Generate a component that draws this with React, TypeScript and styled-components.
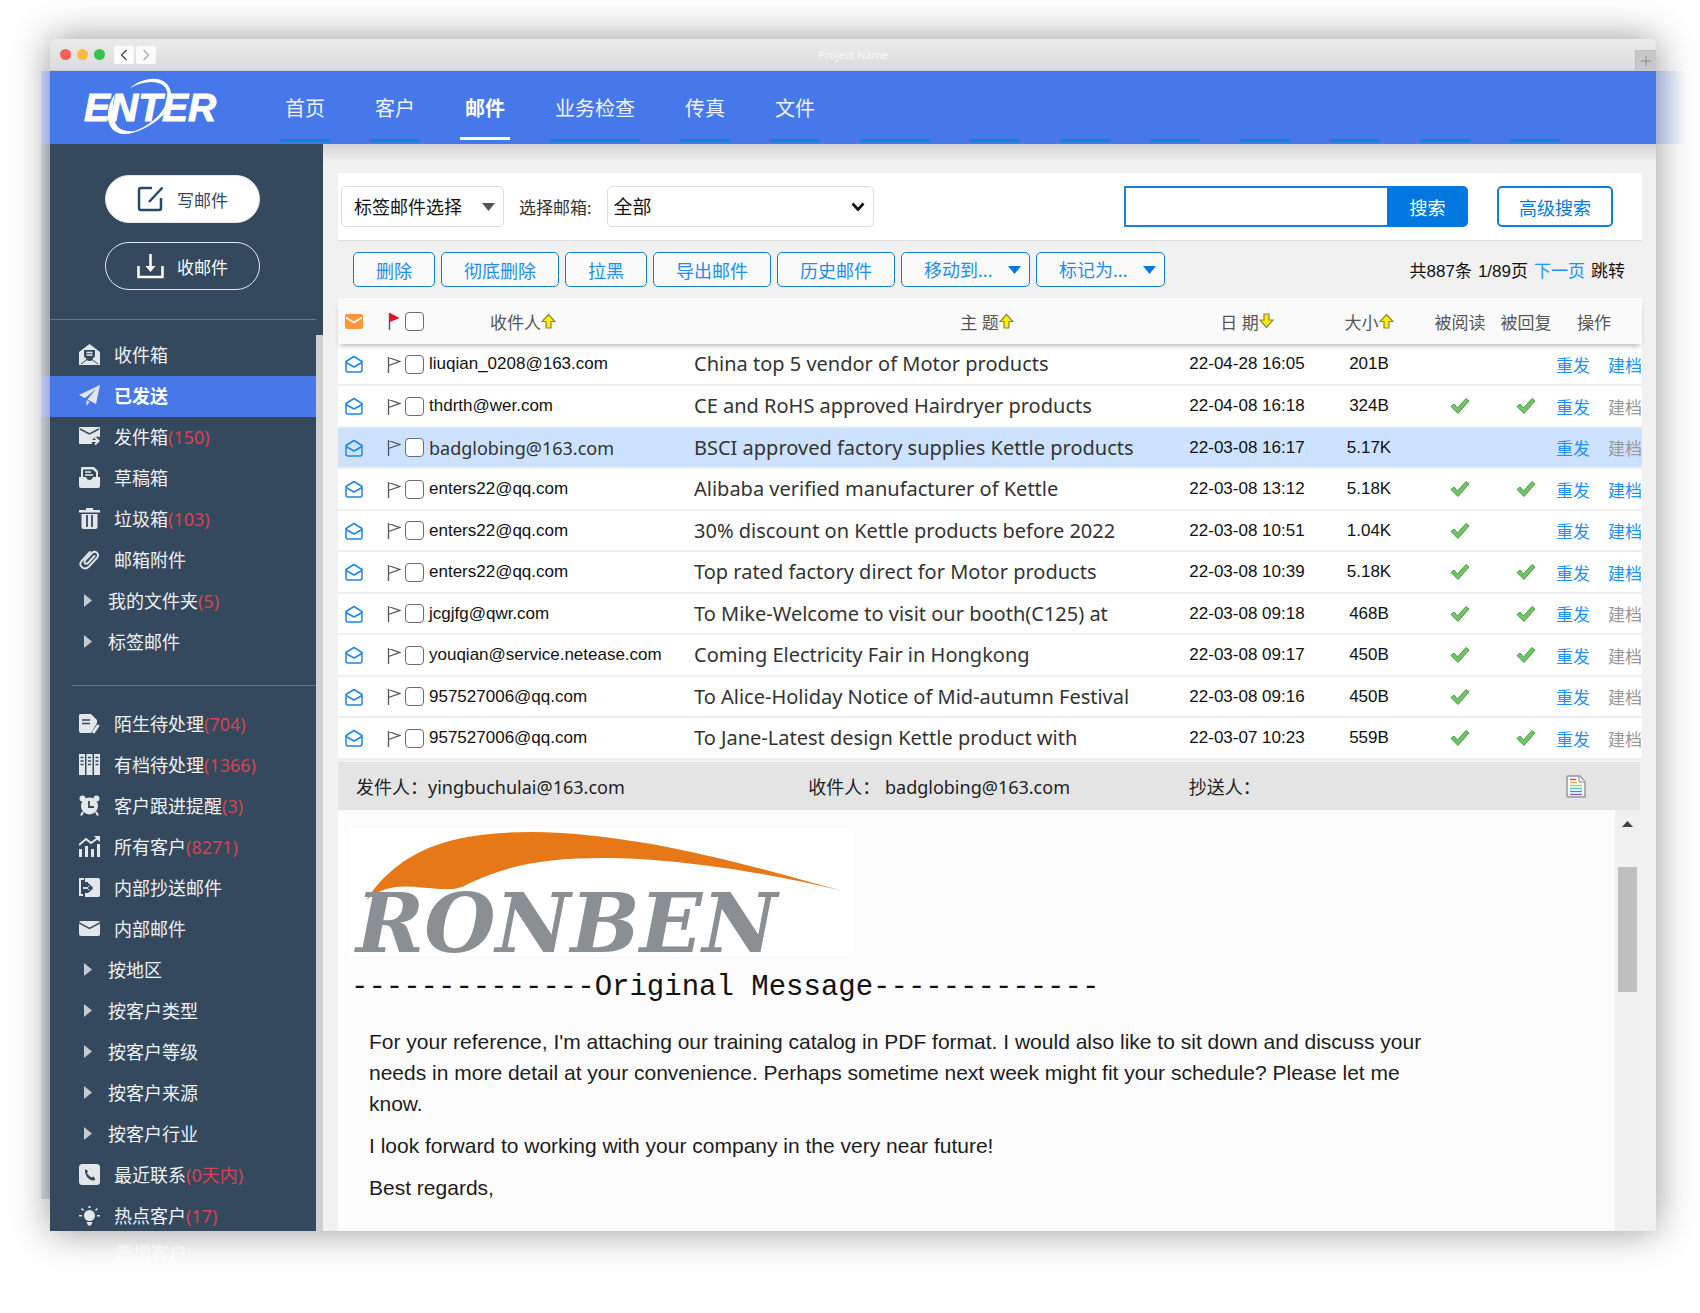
import React from "react";
import styled, { createGlobalStyle, css } from "styled-components";

const cjk = `"Noto Sans", "Noto Sans CJK SC", sans-serif`;
const arial = `"Liberation Sans", "Noto Sans CJK SC", sans-serif`;

const GlobalStyle = createGlobalStyle`
  * { box-sizing: border-box; }
  body { margin: 0; background: #fff; font-family: ${cjk}; }
  button, input, select { font-family: inherit; }
  a { text-decoration: none; color: inherit; }
  ul { list-style: none; margin: 0; padding: 0; }
  svg { display: block; flex: none; }
`;

const Page = styled.div`
  height: 100vh;
  padding: 39px 44px 82px 50px;
  overflow: hidden;
`;

const Window = styled.div`
  position: relative;
  height: 100%;
  display: flex;
  flex-direction: column;
  border-radius: 6px 6px 0 0;
  box-shadow: 0 0 38px rgba(0, 0, 0, 0.42);
  &::before {
    content: "";
    position: absolute;
    left: -9px;
    top: 104px;
    bottom: 32px;
    width: 9px;
    background: linear-gradient(90deg, #c3c7c9, #a4abb0);
  }
`;

/* ---------- title bar ---------- */
const TitleBar = styled.div`
  height: 32px;
  display: grid;
  grid-template-columns: 1fr auto 1fr;
  align-items: center;
  background: linear-gradient(#ebebeb, #dcdcdc);
  border-bottom: 1px solid #c4c8d2;
  border-radius: 6px 6px 0 0;
`;
const WindowControls = styled.div`
  display: flex;
  align-items: center;
  gap: 6px;
  padding-left: 10px;
`;
const Light = styled.span<{ $color: string }>`
  width: 11px;
  height: 11px;
  border-radius: 50%;
  background: ${(p) => p.$color};
`;
const History = styled.div`
  display: flex;
  gap: 2px;
  padding-left: 3px;
`;
const HistoryButton = styled.button`
  width: 20px;
  height: 18px;
  padding: 0;
  display: grid;
  place-items: center;
  border: 0;
  border-radius: 2px;
  background: #fbfbfb;
`;
const Title = styled.span`
  font-size: 11px;
  color: #f8f8f8;
`;
const NewTab = styled.button`
  justify-self: end;
  align-self: end;
  width: 21px;
  height: 20px;
  padding: 0;
  display: grid;
  place-items: center;
  border: 1px solid #bcbcbc;
  border-width: 1px 0 0 1px;
  background: #c8c8c8;
`;

/* ---------- header ---------- */
const Header = styled.header`
  position: relative;
  z-index: 1;
  height: 73px;
  flex: none;
  display: flex;
  background: #4678e9;
  &::before {
    content: "";
    position: absolute;
    left: -9px;
    top: 0;
    bottom: 0;
    width: 9px;
    background: linear-gradient(90deg, #c0cbe9, #9cb0e4);
  }
  &::after {
    content: "";
    position: absolute;
    left: 100%;
    top: 0;
    bottom: 0;
    width: 30px;
    background: linear-gradient(90deg, rgba(90, 130, 230, 0.34), rgba(90, 130, 230, 0));
  }
`;
const Brand = styled.a`
  width: 230px;
  padding: 6px 0 0 34px;
`;
const Nav = styled.nav`
  display: flex;
  gap: 40px;
`;
const NavItem = styled.a<{ $active?: boolean }>`
  height: 71px;
  padding: 20px 5px 0;
  border-bottom: 3px solid #0a86d2;
  font-size: 20px;
  line-height: 36px;
  color: #eef3ff;
  white-space: nowrap;
  ${(p) =>
    p.$active &&
    css`
      height: 69px;
      font-weight: 700;
      color: #fff;
      border-color: #fff;
    `}
`;
const NavSlot = styled.span<{ $width: number }>`
  width: ${(p) => p.$width}px;
  height: 71px;
  border-bottom: 3px solid #0a86d2;
`;

/* ---------- body ---------- */
const Body = styled.div`
  flex: 1;
  min-height: 0;
  display: flex;
  background: #f0f0f0;
`;
const Sidebar = styled.aside`
  width: 273px;
  flex: none;
  overflow-x: visible;
  overflow-y: clip;
  background: #34485e;
`;
const SidebarTop = styled.div`
  height: 176px;
  margin-right: 7px;
  padding: 31px 0 0 55px;
  display: flex;
  flex-direction: column;
  gap: 19px;
  border-bottom: 1px solid #66778a;
`;
const PillButton = styled.button<{ $solid?: boolean }>`
  width: 155px;
  height: 48px;
  padding: 0 0 0 31px;
  display: flex;
  align-items: center;
  gap: 13px;
  border: 1px solid #e4e8ec;
  border-radius: 24px;
  font-size: 17px;
  background: ${(p) => (p.$solid ? "#fff" : "transparent")};
  color: ${(p) => (p.$solid ? "#34485e" : "#fff")};
`;
const SidebarScroll = styled.div`
  margin-top: 15px;
  border-right: 7px solid #d0d0d0;
`;
const FolderDivider = styled.hr`
  margin: 22px 0 18px 22px;
  border: 0;
  border-top: 1px solid #66778a;
`;
const Folder = styled.a<{ $active?: boolean; $group?: boolean }>`
  position: relative;
  height: 41px;
  padding: 0 0 2px ${(p) => (p.$group ? 34 : 29)}px;
  display: flex;
  align-items: center;
  gap: ${(p) => (p.$group ? 16 : 14)}px;
  font-size: 18px;
  line-height: 24px;
  color: #f0f2f4;
  white-space: nowrap;
  ${(p) =>
    p.$active &&
    css`
      background: #4878e8;
      color: #fff;
      font-weight: 700;
      &::before {
        content: "";
        position: absolute;
        left: -9px;
        top: 0;
        bottom: 0;
        width: 9px;
        background: linear-gradient(90deg, #c0cbe9, #9cb0e4);
      }
    `}
`;
const Count = styled.span`
  color: #d8434f;
`;
const FadedFolder = styled.div`
  position: absolute;
  left: 65px;
  top: 100%;
  padding-top: 10px;
  font-size: 18px;
  line-height: 24px;
  color: rgba(255, 255, 255, 0.6);
`;

/* ---------- main panel ---------- */
const Main = styled.main`
  flex: 1;
  min-width: 0;
  display: flex;
  flex-direction: column;
  padding: 29px 14px 0 15px;
  background: linear-gradient(#d4d1d1, #f1f1f1 18px);
`;
const FilterBar = styled.form`
  height: 68px;
  flex: none;
  display: flex;
  align-items: center;
  padding: 0 29px 0 3px;
  background: #fff;
  border-bottom: 1px solid #dedede;
`;
const SelectWrap = styled.span`
  position: relative;
  display: inline-flex;
  align-items: center;
  svg {
    position: absolute;
    right: 9px;
    pointer-events: none;
  }
`;
const Select = styled.select<{ $width: number; $tool?: boolean }>`
  appearance: none;
  width: ${(p) => p.$width}px;
  height: 41px;
  padding: 0 0 0 12px;
  border: 1px solid #dcdcdc;
  border-radius: 5px;
  background: #fff;
  font-size: 18px;
  color: #111;
  ${(p) =>
    p.$tool &&
    css`
      height: 35px;
      padding-left: 22px;
      border-color: #0d7de0;
      background: #fafafa;
      color: #1e8cf0;
    `}
`;
const MailboxSelect = styled(Select)`
  padding-left: 6px;
  font-size: 19px;
`;
const MailboxLabel = styled.label`
  margin: 0 15px;
  font-size: 17px;
  color: #333;
`;
const SearchGroup = styled.div`
  display: flex;
  margin-left: auto;
`;
const SearchInput = styled.input`
  width: 263px;
  height: 41px;
  padding: 0 10px;
  border: 2px solid #1a80dc;
  border-right: 0;
  background: #fff;
  font-size: 18px;
`;
const SearchButton = styled.button`
  width: 81px;
  height: 41px;
  padding: 0;
  border: 0;
  border-radius: 0 5px 5px 0;
  background: #0078e0;
  color: #fff;
  font-size: 18px;
`;
const OutlineButton = styled.button<{ $large?: boolean }>`
  height: ${(p) => (p.$large ? 41 : 35)}px;
  padding: 0 ${(p) => (p.$large ? 20 : 22)}px;
  border: ${(p) => (p.$large ? 2 : 1)}px solid #0d7de0;
  border-radius: 5px;
  background: ${(p) => (p.$large ? "#fff" : "#fafafa")};
  color: ${(p) => (p.$large ? "#0078e0" : "#1e8cf0")};
  font-size: 18px;
  white-space: nowrap;
`;
const AdvancedWrap = styled.div`
  margin-left: 29px;
`;
const ActionBar = styled.div`
  height: 57px;
  flex: none;
  display: flex;
  align-items: center;
  gap: 6px;
  padding: 0 17px 0 15px;
`;
const Pager = styled.div`
  margin-left: auto;
  display: flex;
  gap: 6px;
  font-family: ${arial};
  font-size: 17px;
  color: #111;
  white-space: nowrap;
  a:first-of-type { color: #1e90ff; }
`;

/* ---------- mail table ---------- */
const MailTable = styled.table`
  width: 100%;
  table-layout: fixed;
  border-collapse: collapse;
  background: #fff;
  font-family: ${arial};
  font-size: 17px;
  color: #111;
  td, th {
    padding: 0;
    white-space: nowrap;
    text-align: center;
  }
`;
const Head = styled.thead`
  position: relative;
  background: #fafafa;
  box-shadow: 0 4px 5px -2px rgba(0, 0, 0, 0.28);
  tr { height: 46px; }
  th { font-weight: 400; color: #555; }
`;
const Row = styled.tr<{ $selected?: boolean }>`
  height: 41px;
  border-bottom: 2px solid #efefef;
  background: ${(p) => (p.$selected ? "#cde2ff" : "#fff")};
  &:nth-child(even) { height: 42px; }
`;
const HeadLabel = styled.span<{ $before?: number; $after?: number }>`
  display: inline-flex;
  align-items: center;
  padding-left: ${(p) => p.$before || 0}px;
  padding-right: ${(p) => p.$after || 0}px;
`;
const StatusBox = styled.div`
  padding-left: 7px;
`;
const Marks = styled.div`
  display: flex;
  align-items: center;
  gap: 4px;
`;
const Checkbox = styled.input`
  appearance: none;
  flex: none;
  width: 19px;
  height: 19px;
  margin: 0;
  border: 1px solid #6c6c6c;
  border-radius: 4px;
  background: #fff;
`;
const Address = styled.div<{ $alt?: boolean }>`
  padding-left: 2px;
  text-align: left;
  ${(p) => p.$alt && css`font-family: "Noto Sans", sans-serif; font-size: 18px; line-height: 24px; color: #333;`}
`;
const Subject = styled.div`
  padding-left: 2px;
  font-family: "Noto Sans", sans-serif;
  font-size: 20px;
  line-height: 28px;
  color: #333;
  text-align: left;
`;
const Tick = styled.div`
  display: flex;
  justify-content: center;
`;
const Actions = styled.div`
  display: flex;
  justify-content: space-between;
`;
const ActionLink = styled.a<{ $muted?: boolean }>`
  color: ${(p) => (p.$muted ? "#999" : "#1e90ff")};
`;

/* ---------- message ---------- */
const MessageMeta = styled.div`
  height: 50px;
  flex: none;
  display: grid;
  grid-template-columns: 453fr 381fr 378fr 74fr;
  align-items: center;
  padding-left: 18px;
  margin-right: 2px;
  border-top: 2px solid #eef1f7;
  background: #e4e4e4;
  font-size: 18px;
  color: #222;
`;
const Message = styled.div`
  flex: 1;
  min-height: 0;
  display: flex;
  margin-right: 2px;
  background: #fcfcfc;
`;
const MessageContent = styled.article`
  flex: 1;
  min-width: 0;
  padding: 18px 0 0 13px;
  overflow: hidden;
`;
const LogoFrame = styled.div`
  width: 502px;
  height: 128px;
  background: #fff;
  svg { overflow: visible; }
`;
const Original = styled.div`
  margin-top: 12px;
  font-family: "Liberation Mono", monospace;
  font-size: 29px;
  line-height: 40px;
  color: #111;
  white-space: nowrap;
`;
const Letter = styled.div`
  max-width: 1080px;
  padding: 18px 0 0 18px;
  font-family: "Liberation Sans", sans-serif;
  font-size: 21px;
  line-height: 31px;
  color: #1c1c1c;
  p { margin: 0 0 11px; }
`;
const Scrollbar = styled.div`
  width: 25px;
  display: flex;
  flex-direction: column;
  align-items: center;
  gap: 40px;
  padding-top: 11px;
  background: #f0f0f0;
`;
const Thumb = styled.div`
  width: 19px;
  height: 125px;
  background: #bfbfbf;
`;

/* ---------- drawings ---------- */
const Caret = ({ color, size = 13 }: { color: string; size?: number }) => (
  <svg width={size} height="8" viewBox="0 0 13 8"><path d="M0 0h13L6.5 8z" fill={color} /></svg>
);
const Chevron = () => (
  <svg width="14" height="10" viewBox="0 0 14 10"><path d="M1.5 1.5 7 7.5l5.500-6" fill="none" stroke="#111" strokeWidth="2.600" /></svg>
);
const SortArrow = ({ down }: { down?: boolean }) => (
  <svg width="15" height="16" viewBox="0 0 15 16">
    <path d={down ? "M5 1h5v6h4L7.500 14.500 1 7h4z" : "M5 15h5V8.500h4L7.500 1.500 1 8.500h4z"} fill="#ffee00" stroke="#8c8348" strokeWidth="1.200" />
  </svg>
);
const OpenMail = () => (
  <svg width="18" height="18" viewBox="0 0 18 18" fill="none" stroke="#1d86e8" strokeWidth="1.500" strokeLinejoin="round">
    <path d="M1 6.500 9 1.500l8 5v8.500a2 2 0 0 1-2 2H3a2 2 0 0 1-2-2z" /><path d="M1 7.500 9 12l8-4.500" />
  </svg>
);
const OrangeMail = () => (
  <svg width="18" height="15" viewBox="0 0 18 15">
    <rect width="18" height="15" rx="2" fill="#fb963a" /><path d="M1 3.500 9 8.500l8-5" fill="none" stroke="#fff" strokeWidth="1.500" />
  </svg>
);
const Flag = ({ red }: { red?: boolean }) =>
  red ? (
    <svg width="14" height="19" viewBox="0 0 14 19"><path d="M2.500 1v17" stroke="#555" strokeWidth="1.400" /><path d="M3 1l9.500 5L3 10z" fill="#e0141c" /></svg>
  ) : (
    <svg width="14" height="19" viewBox="0 0 14 19" fill="none" stroke="#555" strokeWidth="1.300"><path d="M1.500 2v16M1.500 2.500l11 4-11 4" /></svg>
  );
const Check = () => (
  <svg width="20" height="18" viewBox="0 0 20 18">
    <path d="M1 9.500 4 7l3.500 4L16 1.500l3 2.500L8 16.500z" fill="#6fc465" stroke="#4d9a49" strokeWidth="1" strokeLinejoin="round" />
  </svg>
);
const DocIcon = () => (
  <svg width="20" height="23" viewBox="0 0 20 23">
    <path d="M2 1h12l5 6v15H2a1 1 0 0 1-1-1V2a1 1 0 0 1 1-1z" fill="#fff" stroke="#8d929c" strokeWidth="1.400" />
    <path d="M13 1v6h6" fill="#eee" stroke="#8d929c" />
    <path d="M4 4.500h6" stroke="#b5523c" strokeWidth="1.400" /><path d="M4 7.500h7" stroke="#f0a23c" strokeWidth="1.400" />
    <path d="M4 10.500h12" stroke="#b5cf4f" strokeWidth="1.400" /><path d="M4 13.500h12" stroke="#43c5b5" strokeWidth="1.400" />
    <path d="M4 16.500h12" stroke="#3c8fd6" strokeWidth="1.400" /><path d="M4 19.500h12" stroke="#9454bb" strokeWidth="1.400" />
  </svg>
);
const EnterLogo = () => (
  <svg width="140" height="60" viewBox="0 0 140 60" role="img" aria-label="ENTER">
    <text x="0" y="44" fill="#fff" stroke="#fff" strokeWidth="1" fontFamily="Liberation Sans, sans-serif" fontWeight="700" fontStyle="italic" fontSize="39">ENTER</text>
    <path d="M46 11C55 3 70-1 79 4c12 7 10 24-1 35-10 10-26 18-39 18 14-2 28-10 36-19 10-11 12-26 2-31C69 3 57 5 46 11z" fill="#fff" />
    <path d="M31 17C20 33 21 55 39 57c5 0 10-1 14-3-8 1-15 0-19-4-7-8-6-21-3-33z" fill="#fff" />
  </svg>
);
const RonbenLogo = () => (
  <svg width="502" height="128" viewBox="0 0 502 128" role="img" aria-label="RONBEN">
    <path d="M15 72C45 28 88 4 180 4c110 1 220 34 312 59-90-22-180-33-238-33-60 0-98 7-137 26-10 6-18 5-28 5C62 60 40 52 15 72z" fill="#e67817" />
    <text x="5" y="124" fill="#8a8f93" fontFamily="DejaVu Serif, serif" fontWeight="700" fontStyle="italic" fontSize="82">RONBEN</text>
  </svg>
);
const ComposeIcon = () => (
  <svg width="27" height="26" viewBox="0 0 27 26" fill="none" stroke="#27496b" strokeWidth="2.500">
    <path d="M15 2H4a2 2 0 0 0-2 2v18a2 2 0 0 0 2 2h18a2 2 0 0 0 2-2V12" /><path d="M25.500 1.500 12 16" />
  </svg>
);
const ReceiveIcon = () => (
  <svg width="27" height="25" viewBox="0 0 27 25" fill="none" stroke="#fff" strokeWidth="2.500">
    <path d="M1.500 12v11h24V12M13.500 0v15" /><path d="M8.500 12h10l-5 6z" fill="#fff" stroke="none" />
  </svg>
);

const bg = "#34485e";
const icons: Record<string, React.ReactNode> = {
  inbox: (<><path d="M0 8 10.500 0 21 8v13H0z" /><path d="M5 6h11v6q-2 5-5.500 5T5 12z" fill={bg} /><path d="M7.500 8.500h6M7.500 11h6M1 19l6-5M20 19l-6-5" stroke="#e4e7ea" strokeWidth="1.300" /><path d="M2 20l6-4.500M19 20l-6-4.500" stroke={bg} /></>),
  sent: <path d="M21 0 0 10l6 3L17 4 8.500 14.500 17 19zM7.500 15v6l3-4z" />,
  outbox: (<><path d="M1 1h19a1 1 0 0 1 1 1v9a6 6 0 0 0-8 7H1a1 1 0 0 1-1-1V2a1 1 0 0 1 1-1z" /><path d="M1 3l9.500 5L20 3" fill="none" stroke={bg} strokeWidth="1.500" /><path d="M12 15h7M16 11.500l3.500 3.500-3.500 3.500" fill="none" stroke="#e4e7ea" strokeWidth="2" /></>),
  draft: (<><path d="M3 0h12l4 4v6h2v9a2 2 0 0 1-2 2H2a2 2 0 0 1-2-2v-9h2V1z" /><path d="M4 2.500h10l3 3V10h-3q-1 3-3.500 3T7 10H4z" fill={bg} /><path d="M6 5h6M6 8h8" stroke="#e4e7ea" strokeWidth="1.500" /></>),
  trash: (<><path d="M7 0h7v2h7v2.500H0V2h7zM2.500 6h16v13a2 2 0 0 1-2 2h-12a2 2 0 0 1-2-2z" /><path d="M8 7v12M13 7v12" stroke={bg} strokeWidth="1.800" /></>),
  clip: <path d="M15.500 7 9 14c-2 2-5-.500-3-2.700L13 4c3.500-3 8 1 5 5l-8 8.500C5 22-1 17 2.500 12L11 3" fill="none" stroke="#e4e7ea" strokeWidth="1.900" strokeLinecap="round" />,
  note: (<><path d="M1 1h11l6 6v3l-6 10H2a2 2 0 0 1-2-2V2z" /><path d="M3 7h8M3 10.500h8" stroke={bg} strokeWidth="1.400" /><path d="M14 20l5.500-8" stroke="#e4e7ea" strokeWidth="3" /></>),
  binders: (<><path d="M0 0h6v21H0zM7.500 0h6v21h-6zM15 0h6v21h-6z" /><path d="M1.500 3.500h3M1.500 7h3M1.500 10.500h3M9 3.500h3M9 7h3M9 10.500h3M16.500 3.500h3M16.500 7h3M16.500 10.500h3" stroke={bg} strokeWidth="1.400" /></>),
  alarm: (<><circle cx="10.500" cy="11" r="8.500" /><circle cx="3.500" cy="3.500" r="3" /><circle cx="17.500" cy="3.500" r="3" /><path d="M4 17l-2 3.500M17 17l2 3.500" stroke="#e4e7ea" strokeWidth="2" /><path d="M10 6v6h5" fill="none" stroke={bg} strokeWidth="1.800" /></>),
  chart: (<><path d="M0 13h3v8H0zM6 10h3v11H6zM12 13h3v8h-3zM18 8h3v13h-3z" /><path d="M0 9l7-6 5 4 7-5" fill="none" stroke="#e4e7ea" strokeWidth="2" /><path d="M15 0h6v6z" /></>),
  cc: (<><path d="M6 1h13a2 2 0 0 1 2 2v15a2 2 0 0 1-2 2H6v-4h3V5H6z" /><path d="M5 2H1v16h3" fill="none" stroke="#e4e7ea" strokeWidth="2" /><path d="M4 11h8M9 7l4 4-4 4" fill="none" stroke={bg} strokeWidth="1.800" /><path d="M4 11h5" stroke="#e4e7ea" strokeWidth="1.800" /></>),
  mail: (<><rect y="3" width="21" height="15" rx="2" /><path d="M0 5l10.500 5.500L21 5" fill="none" stroke={bg} strokeWidth="1.500" /></>),
  phone: (<><rect width="21" height="21" rx="3.500" /><path d="M6 5l3 2-1 2.500 4 4 2.500-1 2 3q-3 2.500-7-1T6 5z" fill={bg} /></>),
  bulb: (<><circle cx="10.500" cy="10.500" r="5.500" /><path d="M7.500 17h6l-1.500 3.500h-3zM0 10h3v1.500H0zM18 10h3v1.500h-3zM9.500 1h2v2h-2z" /><path d="M2.500 3.500l2 2M18.500 3.500l-2 2" stroke="#e4e7ea" strokeWidth="1.500" /></>),
};
const FolderIcon = ({ name }: { name: string }) => (
  <svg width="21" height="21" viewBox="0 0 21 21" fill="#e4e7ea">{icons[name]}</svg>
);
const GroupArrow = () => (
  <svg width="8" height="13" viewBox="0 0 8 13"><path d="M0 0l8 6.500L0 13z" fill="#c3cad1" /></svg>
);

/* ---------- data ---------- */
type FolderData = { label: string; count?: string; icon?: string; active?: boolean };
const mailFolders: FolderData[] = [
  { label: "收件箱", icon: "inbox" },
  { label: "已发送", icon: "sent", active: true },
  { label: "发件箱", count: "(150)", icon: "outbox" },
  { label: "草稿箱", icon: "draft" },
  { label: "垃圾箱", count: "(103)", icon: "trash" },
  { label: "邮箱附件", icon: "clip" },
  { label: "我的文件夹", count: "(5)" },
  { label: "标签邮件" },
];
const customerFolders: FolderData[] = [
  { label: "陌生待处理", count: "(704)", icon: "note" },
  { label: "有档待处理", count: "(1366)", icon: "binders" },
  { label: "客户跟进提醒", count: "(3)", icon: "alarm" },
  { label: "所有客户", count: "(8271)", icon: "chart" },
  { label: "内部抄送邮件", icon: "cc" },
  { label: "内部邮件", icon: "mail" },
  { label: "按地区" },
  { label: "按客户类型" },
  { label: "按客户等级" },
  { label: "按客户来源" },
  { label: "按客户行业" },
  { label: "最近联系", count: "(0天内)", icon: "phone" },
  { label: "热点客户", count: "(17)", icon: "bulb" },
];
type Mail = { to: string; subject: string; date: string; size: string; read?: boolean; replied?: boolean; filed?: boolean; selected?: boolean };
const mails: Mail[] = [
  { to: "liuqian_0208@163.com", subject: "China top 5 vendor of Motor products", date: "22-04-28 16:05", size: "201B", filed: true },
  { to: "thdrth@wer.com", subject: "CE and RoHS approved Hairdryer products", date: "22-04-08 16:18", size: "324B", read: true, replied: true },
  { to: "badglobing@163.com", subject: "BSCI approved factory supplies Kettle products", date: "22-03-08 16:17", size: "5.17K", selected: true },
  { to: "enters22@qq.com", subject: "Alibaba verified manufacturer of Kettle", date: "22-03-08 13:12", size: "5.18K", read: true, replied: true, filed: true },
  { to: "enters22@qq.com", subject: "30% discount on Kettle products before 2022", date: "22-03-08 10:51", size: "1.04K", read: true, filed: true },
  { to: "enters22@qq.com", subject: "Top rated factory direct for Motor products", date: "22-03-08 10:39", size: "5.18K", read: true, replied: true, filed: true },
  { to: "jcgjfg@qwr.com", subject: "To Mike-Welcome to visit our booth(C125) at", date: "22-03-08 09:18", size: "468B", read: true, replied: true },
  { to: "youqian@service.netease.com", subject: "Coming Electricity Fair in Hongkong", date: "22-03-08 09:17", size: "450B", read: true, replied: true },
  { to: "957527006@qq.com", subject: "To Alice-Holiday Notice of Mid-autumn Festival", date: "22-03-08 09:16", size: "450B", read: true },
  { to: "957527006@qq.com", subject: "To Jane-Latest design Kettle product with", date: "22-03-07 10:23", size: "559B", read: true, replied: true },
];
const navItems = ["首页", "客户", "邮件", "业务检查", "传真", "文件"];
const navSlots = [70, 50, 50, 50, 50, 50, 50, 50];

const FolderList = ({ items }: { items: FolderData[] }) => (
  <ul>
    {items.map((f) => (
      <li key={f.label}>
        <Folder href="#" $active={f.active} $group={!f.icon}>
          {f.icon ? <FolderIcon name={f.icon} /> : <GroupArrow />}
          <span>{f.label}{f.count && <Count>{f.count}</Count>}</span>
        </Folder>
      </li>
    ))}
  </ul>
);

const MailRow = ({ mail }: { mail: Mail }) => (
  <Row $selected={mail.selected}>
    <td><StatusBox><OpenMail /></StatusBox></td>
    <td><Marks><Flag /><Checkbox type="checkbox" aria-label={mail.subject} /></Marks></td>
    <td><Address $alt={mail.selected}>{mail.to}</Address></td>
    <td><Subject>{mail.subject}</Subject></td>
    <td>{mail.date}</td>
    <td>{mail.size}</td>
    <td>{mail.read && <Tick><Check /></Tick>}</td>
    <td>{mail.replied && <Tick><Check /></Tick>}</td>
    <td>
      <Actions>
        <ActionLink href="#">重发</ActionLink>
        <ActionLink href="#" $muted={!mail.filed}>建档</ActionLink>
      </Actions>
    </td>
  </Row>
);

export default function App() {
  return (
    <Page lang="zh-CN">
      <GlobalStyle />
      <Window>
        <TitleBar>
          <WindowControls>
            <Light $color="#fb5f57" /><Light $color="#fcbb3f" /><Light $color="#34c648" />
            <History>
              <HistoryButton aria-label="后退"><svg width="8" height="12" viewBox="0 0 8 12"><path d="M6.500 1 1.500 6l5 5" fill="none" stroke="#444" strokeWidth="1.300" /></svg></HistoryButton>
              <HistoryButton aria-label="前进"><svg width="8" height="12" viewBox="0 0 8 12"><path d="M1.500 1l5 5-5 5" fill="none" stroke="#aaa" strokeWidth="1.300" /></svg></HistoryButton>
            </History>
          </WindowControls>
          <Title>Project Name</Title>
          <NewTab aria-label="新标签页"><svg width="10" height="10" viewBox="0 0 10 10"><path d="M5 0v10M0 5h10" stroke="#8c8c8c" /></svg></NewTab>
        </TitleBar>

        <Header>
          <Brand href="#"><EnterLogo /></Brand>
          <Nav>
            {navItems.map((n) => <NavItem key={n} href="#" $active={n === "邮件"}>{n}</NavItem>)}
            {navSlots.map((w, i) => <NavSlot key={i} $width={w} />)}
          </Nav>
        </Header>

        <Body>
          <Sidebar>
            <SidebarTop>
              <PillButton $solid><ComposeIcon />写邮件</PillButton>
              <PillButton><ReceiveIcon />收邮件</PillButton>
            </SidebarTop>
            <SidebarScroll>
              <FolderList items={mailFolders} />
              <FolderDivider />
              <FolderList items={customerFolders} />
            </SidebarScroll>
          </Sidebar>

          <Main>
            <FilterBar onSubmit={(e) => e.preventDefault()}>
              <SelectWrap>
                <Select $width={163} aria-label="标签邮件选择"><option>标签邮件选择</option></Select>
                <Caret color="#555" />
              </SelectWrap>
              <MailboxLabel htmlFor="mailbox">选择邮箱:</MailboxLabel>
              <SelectWrap>
                <MailboxSelect id="mailbox" $width={267}><option>全部</option></MailboxSelect>
                <Chevron />
              </SelectWrap>
              <SearchGroup>
                <SearchInput type="text" aria-label="搜索邮件" />
                <SearchButton type="submit">搜索</SearchButton>
              </SearchGroup>
              <AdvancedWrap><OutlineButton type="button" $large>高级搜索</OutlineButton></AdvancedWrap>
            </FilterBar>

            <ActionBar>
              {["删除", "彻底删除", "拉黑", "导出邮件", "历史邮件"].map((t) => <OutlineButton key={t}>{t}</OutlineButton>)}
              {["移动到...", "标记为..."].map((t) => (
                <SelectWrap key={t}>
                  <Select $width={129} $tool aria-label={t}><option>{t}</option></Select>
                  <Caret color="#0078e0" />
                </SelectWrap>
              ))}
              <Pager>
                <span>共887条</span><span>1/89页</span><a href="#">下一页</a><a href="#">跳转</a>
              </Pager>
            </ActionBar>

            <MailTable>
              <colgroup>
                <col width="49" /><col width="40" /><col width="265" /><col /><col width="134" />
                <col width="110" /><col width="72" /><col width="60" /><col width="86" />
              </colgroup>
              <Head>
                <tr>
                  <th><StatusBox><OrangeMail /></StatusBox></th>
                  <th><Marks><Flag red /><Checkbox type="checkbox" aria-label="全选" /></Marks></th>
                  <th><HeadLabel $after={73}>收件人<SortArrow /></HeadLabel></th>
                  <th><HeadLabel $before={102}>主 题<SortArrow /></HeadLabel></th>
                  <th><HeadLabel>日 期<SortArrow down /></HeadLabel></th>
                  <th><HeadLabel>大小<SortArrow /></HeadLabel></th>
                  <th>被阅读</th>
                  <th>被回复</th>
                  <th><HeadLabel $after={10}>操作</HeadLabel></th>
                </tr>
              </Head>
              <tbody>{mails.map((m, i) => <MailRow key={i} mail={m} />)}</tbody>
            </MailTable>

            <MessageMeta>
              <span>发件人：yingbuchulai@163.com</span>
              <span>收件人： badglobing@163.com</span>
              <span>抄送人：</span>
              <DocIcon />
            </MessageMeta>

            <Message>
              <MessageContent>
                <LogoFrame><RonbenLogo /></LogoFrame>
                <Original>--------------Original Message-------------</Original>
                <Letter>
                  <p>For your reference, I'm attaching our training catalog in PDF format. I would also like to sit down and discuss your needs in more detail at your convenience. Perhaps sometime next week might fit your schedule? Please let me know.</p>
                  <p>I look forward to working with your company in the very near future!</p>
                  <p>Best regards,</p>
                </Letter>
              </MessageContent>
              <Scrollbar>
                <svg width="11" height="6" viewBox="0 0 11 6"><path d="M5.500 0 11 6H0z" fill="#444" /></svg>
                <Thumb />
              </Scrollbar>
            </Message>
          </Main>
        </Body>
        <FadedFolder aria-hidden="true">新增客户</FadedFolder>
      </Window>
    </Page>
  );
}
